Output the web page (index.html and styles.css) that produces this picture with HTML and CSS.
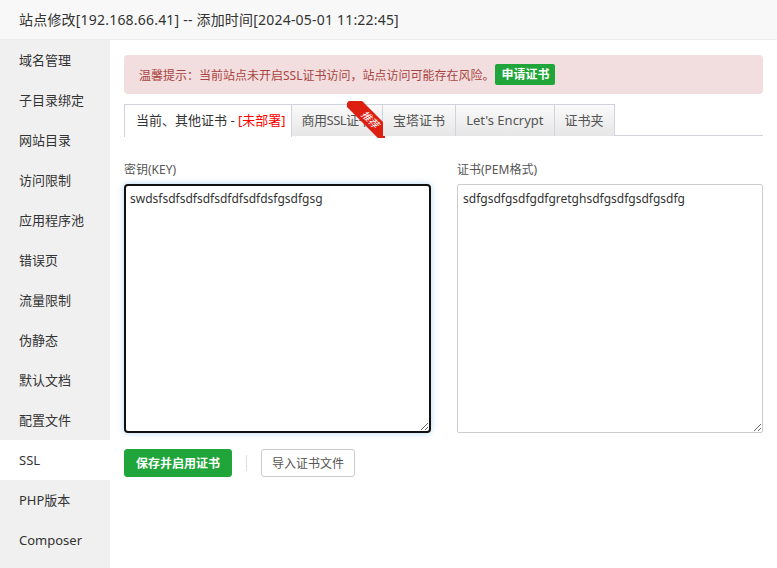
FILE: index.html
```html
<!DOCTYPE html>
<html lang="zh-CN">
<head>
    <meta charset="UTF-8">
    <title>站点修改</title>
    <link rel="stylesheet" href="styles.css">
</head>
<body>
<div class="layer">
    <div class="layer-title">站点修改[192.168.66.41] -- 添加时间[2024-05-01 11:22:45]</div>
    <div class="layer-body">
        <ul class="side-menu">
            <li>域名管理</li>
            <li>子目录绑定</li>
            <li>网站目录</li>
            <li>访问限制</li>
            <li>应用程序池</li>
            <li>错误页</li>
            <li>流量限制</li>
            <li>伪静态</li>
            <li>默认文档</li>
            <li>配置文件</li>
            <li class="on">SSL</li>
            <li>PHP版本</li>
            <li>Composer</li>
        </ul>

        <div class="main">
            <div class="alert">
                温馨提示：当前站点未开启SSL证书访问，站点访问可能存在风险。<span class="btn-apply">申请证书</span>
            </div>

            <div class="tabs">
                <span class="tab on">当前、其他证书 - <em>[未部署]</em></span>
                <span class="tab hot">商用SSL证书<i class="ribbon"><b>推荐</b></i></span>
                <span class="tab">宝塔证书</span>
                <span class="tab">Let's Encrypt</span>
                <span class="tab">证书夹</span>
            </div>

            <div class="cert-form">
                <div class="col">
                    <div class="label">密钥(KEY)</div>
                    <textarea class="box focus" spellcheck="false">swdsfsdfsdfsdfsdfdfsdfdsfgsdfgsg</textarea>
                </div>
                <div class="col">
                    <div class="label">证书(PEM格式)</div>
                    <textarea class="box" spellcheck="false">sdfgsdfgsdfgdfgretghsdfgsdfgsdfgsdfg</textarea>
                </div>
            </div>

            <div class="actions">
                <button class="btn btn-green">保存并启用证书</button>
                <span class="sep"></span>
                <button class="btn btn-default">导入证书文件</button>
            </div>
        </div>
    </div>
</div>
</body>
</html>
```

FILE: styles.css
```css
*{
    margin: 0;
    padding: 0;
    box-sizing: border-box;
}
html, body{
    height: 100%;
    overflow: hidden;
}
body{
    font-family: "Noto Sans", "Noto Sans CJK SC", sans-serif;
    color: #333;
    background: #fff;
}

.layer{
    height: 100%;
    display: flex;
    flex-direction: column;
}
.layer-title{
    height: 40px;
    line-height: 39px;
    padding-left: 19px;
    font-size: 14px;
    letter-spacing: 0.2px;
    background: #f8f8f8;
    border-bottom: 1px solid #eee;
}
.layer-body{
    flex: 1;
    display: flex;
}

.side-menu{
    list-style: none;
    width: 110px;
    background: #f0f0f0;
}
.side-menu li{
    height: 40px;
    line-height: 40px;
    padding-left: 19px;
    font-size: 13px;
}
.side-menu li.on{
    background: #fff;
}

.main{
    flex: 1;
    padding: 15px 14px;
}

.alert{
    height: 39px;
    display: flex;
    align-items: center;
    padding-left: 15px;
    background: #f2dede;
    border-radius: 4px;
    color: #a94442;
    font-size: 12px;
}
.btn-apply{
    margin-left: 1px;
    height: 21px;
    line-height: 21px;
    padding: 0 6px;
    background: #20a53a;
    color: #fff;
    font-weight: bold;
    border-radius: 2px;
    font-size: 12px;
}

.tabs{
    margin-top: 10px;
    height: 32px;
    display: flex;
    border-bottom: 1px solid #d2d2de;
}
.tab{
    position: relative;
    height: 32px;
    line-height: 31px;
    padding: 0 10px;
    font-size: 13px;
    color: #555;
    background: linear-gradient(#fafafa, #e6e6e6);
    border: 1px solid #d2d2de;
    border-left: none;
    border-bottom: none;
}
.tab:first-child{
    border-left: 1px solid #d2d2de;
}
.tab.on{
    background: #fff;
    color: #333;
    height: 33px;
    padding: 0 5px 0 11px;
}
.tab.hot{
    padding: 0 11px 0 10px;
    letter-spacing: -0.5px;
}
.tab em{
    font-style: normal;
    color: #f00;
}
.ribbon{
    position: absolute;
    top: -4px;
    right: -3px;
    width: 38px;
    height: 37px;
    overflow: hidden;
}
.ribbon b{
    position: absolute;
    top: 11px;
    left: -5px;
    width: 56px;
    height: 15px;
    line-height: 15px;
    text-align: center;
    background: #dc1f10;
    color: #fff;
    font-size: 10px;
    font-weight: normal;
    letter-spacing: 0;
    transform: rotate(45deg);
}

.cert-form{
    display: grid;
    grid-template-columns: 307px 306px;
    column-gap: 26px;
    padding-top: 24px;
}
.label{
    height: 20px;
    line-height: 20px;
    font-size: 12px;
    color: #555;
    margin-bottom: 4px;
}
.box{
    display: block;
    width: 100%;
    height: 249px;
    padding: 5px;
    font-family: "Noto Sans", "Noto Sans CJK SC", sans-serif;
    font-size: 12px;
    color: #333;
    border: 1px solid #ccc;
    border-radius: 2px;
    outline: none;
    resize: both;
}
.box.focus{
    border: 2px solid #111;
    border-radius: 4px;
    padding: 4px;
    box-shadow: 0 0 6px rgba(102, 175, 233, 0.5);
}

.actions{
    margin-top: 16px;
    display: flex;
    align-items: center;
}
.btn{
    height: 28px;
    padding: 0 11px;
    font-family: "Noto Sans", "Noto Sans CJK SC", sans-serif;
    font-size: 12px;
    border-radius: 3px;
    cursor: pointer;
}
.btn-green{
    background: #20a53a;
    border: 1px solid #20a53a;
    color: #fff;
    font-weight: bold;
}
.btn-default{
    background: #fff;
    border: 1px solid #ccc;
    color: #555;
    padding: 0 10px;
}
.sep{
    width: 1px;
    height: 16px;
    background: #ddd;
    margin: 0 14px;
}
```
